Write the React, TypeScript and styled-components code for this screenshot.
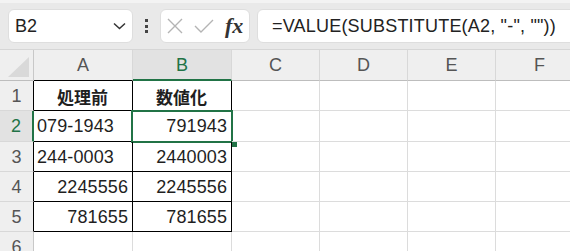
import styled, { createGlobalStyle } from 'styled-components';

const green = '#217346';

const GlobalStyle = createGlobalStyle`
  body {
    margin: 0;
    background: #ffffff;
    font-family: "Liberation Sans", "Noto Sans CJK JP", sans-serif;
  }
`;

const Page = styled.div`
  width: 570px;
  height: 251px;
  overflow: hidden;
  background: #fff;
`;

const Toolbar = styled.div`
  display: flex;
  align-items: flex-start;
  height: 50px;
  box-sizing: border-box;
  padding: 6px 0 0 8px;
  background: #e9e9e9;
  border-top: 3px solid #f3f3f3;
  border-bottom: 1px solid #d6d6d6;
`;

const NameBox = styled.div`
  width: 125px;
  height: 34px;
  box-sizing: border-box;
  display: flex;
  align-items: center;
  justify-content: space-between;
  padding: 0 6px 0 6px;
  background: #fff;
  border: 1px solid #dedede;
  border-radius: 6px;
  font-size: 18px;
  color: #222;
`;

const Dots = styled.div`
  width: 27px;
  height: 34px;
  display: flex;
  flex-direction: column;
  align-items: center;
  justify-content: center;
  gap: 2.5px;

  span {
    width: 3px;
    height: 3px;
    background: #444;
  }
`;

const IconBox = styled.div`
  width: 90px;
  height: 34px;
  box-sizing: border-box;
  display: flex;
  align-items: center;
  padding-left: 6px;
  gap: 11px;
  background: #fff;
  border: 1px solid #dedede;
  border-radius: 6px;
`;

const Fx = styled.span`
  font-family: "Liberation Serif", serif;
  font-style: italic;
  font-weight: bold;
  font-size: 22px;
  color: #333;
  margin-left: 0;
`;

const FormulaBox = styled.div`
  flex: 1;
  height: 34px;
  box-sizing: border-box;
  margin: 0 -10px 0 7px;
  display: flex;
  align-items: center;
  padding-left: 14px;
  background: #fff;
  border: 1px solid #dedede;
  border-radius: 6px;
  font-size: 18px;
  letter-spacing: 0.2px;
  color: #222;
  white-space: nowrap;
`;

const Sheet = styled.div`
  display: grid;
  grid-template-columns: 34px 99px 99px 88px 88px 88px 88px;
  grid-template-rows: 31px repeat(6, 30.25px);
`;

const Corner = styled.div`
  display: flex;
  align-items: flex-end;
  justify-content: flex-end;
  padding: 0 4px 3px 0;
  background: #efefef;
  border-right: 1px solid #c8c8c8;
  border-bottom: 1px solid #bdbdbd;
`;

const Triangle = styled.div`
  width: 0;
  height: 0;
  border-left: 21px solid transparent;
  border-bottom: 20px solid #d9d9d9;
`;

const ColHead = styled.div<{ $on?: boolean; $edge?: string }>`
  display: flex;
  align-items: center;
  justify-content: center;
  box-sizing: border-box;
  padding-top: 1px;
  font-size: 18px;
  color: ${p => (p.$on ? green : '#555')};
  background: ${p => (p.$on ? '#e2e2e2' : '#efefef')};
  border-right: 1px solid #d8d8d8;
  border-bottom: ${p => (p.$on ? `2px solid ${green}` : `1px solid ${p.$edge ?? '#bdbdbd'}`)};
`;

const RowHead = styled.div<{ $on?: boolean; $edge?: string }>`
  display: flex;
  align-items: center;
  justify-content: center;
  box-sizing: border-box;
  padding-top: 2px;
  font-size: 18px;
  color: ${p => (p.$on ? green : '#555')};
  background: ${p => (p.$on ? '#e2e2e2' : '#efefef')};
  border-bottom: 1px solid #d8d8d8;
  border-right: ${p => (p.$on ? `2px solid ${green}` : `1px solid ${p.$edge ?? '#c8c8c8'}`)};
`;

const Cell = styled.div<{ $align?: 'left' | 'right' | 'center'; $bold?: boolean; $boxed?: boolean }>`
  position: relative;
  display: flex;
  align-items: center;
  box-sizing: border-box;
  padding: 2px 4px 0 3px;
  justify-content: ${p =>
    p.$align === 'right' ? 'flex-end' : p.$align === 'center' ? 'center' : 'flex-start'};
  font-size: ${p => (p.$bold ? '17px' : '18px')};
  font-weight: ${p => (p.$bold ? 700 : 400)};
  letter-spacing: ${p => (p.$bold ? '0' : '0.1px')};
  color: #1f1f1f;
  white-space: nowrap;
  border-right: 1px solid ${p => (p.$boxed ? '#000' : '#dcdcdc')};
  border-bottom: 1px solid ${p => (p.$boxed ? '#000' : '#dcdcdc')};
`;

const Selection = styled.div`
  position: absolute;
  left: -2px;
  top: -1px;
  right: -2px;
  bottom: -2px;
  border: 2px solid ${green};
  pointer-events: none;
`;

const Handle = styled.div`
  position: absolute;
  right: -6px;
  bottom: -6px;
  width: 6px;
  height: 6px;
  background: ${green};
`;

type CellData = { v: string; align: 'left' | 'right' | 'center'; bold?: boolean };

const data: CellData[][] = [
  [{ v: '処理前', align: 'center', bold: true }, { v: '数値化', align: 'center', bold: true }],
  [{ v: '079-1943', align: 'left' }, { v: '791943', align: 'right' }],
  [{ v: '244-0003', align: 'left' }, { v: '2440003', align: 'right' }],
  [{ v: '2245556', align: 'right' }, { v: '2245556', align: 'right' }],
  [{ v: '781655', align: 'right' }, { v: '781655', align: 'right' }],
];

const cols = ['A', 'B', 'C', 'D', 'E', 'F'];

export default function App() {
  return (
    <Page>
      <GlobalStyle />
      <Toolbar>
        <NameBox>
          <span>B2</span>
          <svg width="13" height="8" viewBox="0 0 13 8">
            <path d="M1 1.5 L6.5 6.5 L12 1.5" fill="none" stroke="#333" strokeWidth="1.5" />
          </svg>
        </NameBox>
        <Dots>
          <span />
          <span />
          <span />
        </Dots>
        <IconBox>
          <svg width="16" height="16" viewBox="0 0 16 16">
            <path d="M1 1 L15 15 M15 1 L1 15" stroke="#b4b4b4" strokeWidth="1.4" fill="none" />
          </svg>
          <svg width="20" height="14" viewBox="0 0 20 14">
            <path d="M1 7 L7 13 L19 1" stroke="#b4b4b4" strokeWidth="1.4" fill="none" />
          </svg>
          <Fx>fx</Fx>
        </IconBox>
        <FormulaBox>=VALUE(SUBSTITUTE(A2, "-", ""))</FormulaBox>
      </Toolbar>

      <Sheet>
        <Corner>
          <Triangle />
        </Corner>
        {cols.map(c => (
          <ColHead key={c} $on={c === 'B'} $edge={c === 'A' ? '#000' : undefined}>
            {c}
          </ColHead>
        ))}

        {[1, 2, 3, 4, 5, 6].map(r => {
          const row = data[r - 1];
          return [
            <RowHead key={`h${r}`} $on={r === 2} $edge={row ? '#000' : undefined}>
              {r}
            </RowHead>,
            ...cols.map((c, i) => {
              const d = row && i < 2 ? row[i] : undefined;
              const selected = r === 2 && c === 'B';
              return (
                <Cell key={`${c}${r}`} $align={d?.align} $bold={d?.bold} $boxed={!!d}>
                  {d?.v}
                  {selected && (
                    <Selection>
                      <Handle />
                    </Selection>
                  )}
                </Cell>
              );
            }),
          ];
        })}
      </Sheet>
    </Page>
  );
}
